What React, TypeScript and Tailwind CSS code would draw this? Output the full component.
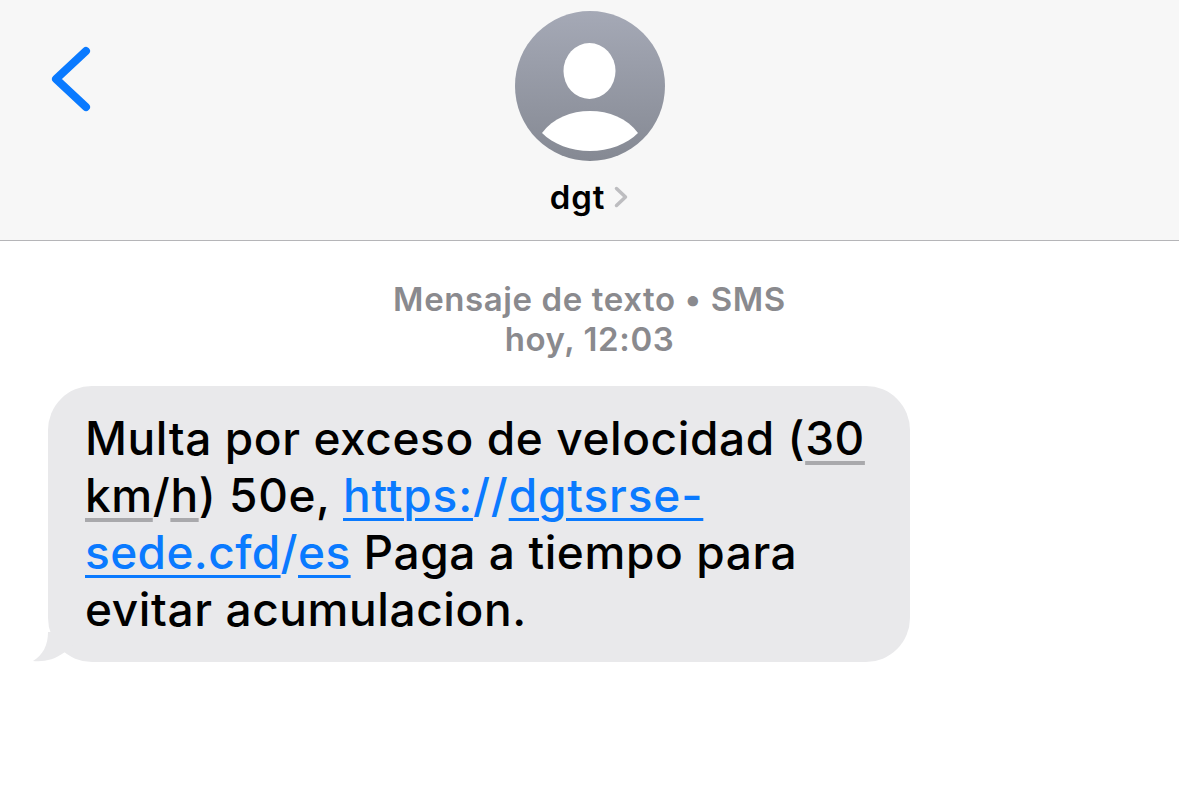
import React from 'react'

function Avatar() {
  return (
    <svg viewBox="0 0 150 150" className="h-[150px] w-[150px]">
      <defs>
        <linearGradient id="av" x1="0" y1="0" x2="0" y2="1">
          <stop offset="0" stopColor="#a5a9b6" />
          <stop offset="1" stopColor="#858993" />
        </linearGradient>
      </defs>
      <circle cx="75" cy="75" r="75" fill="url(#av)" />
      <ellipse cx="74.500" cy="60" rx="26" ry="28" fill="#fff" />
      <path d="M27 122C38 107 56 100 75 100s37 7 48 22c-11 11-29 18-48 18s-37-7-48-18z" fill="#fff" />
    </svg>
  )
}

function Detected({ children }: { children: React.ReactNode }) {
  return <span className="underline decoration-[#a9a9ac] decoration-[4px] underline-offset-[6px]">{children}</span>
}

function Link({ children }: { children: React.ReactNode }) {
  return <span className="underline decoration-[#0a7aff] decoration-[3px] underline-offset-[6px]">{children}</span>
}

export default function App() {
  return (
    <div className="flex h-[806px] w-[1179px] flex-col overflow-hidden bg-white font-['Inter','Liberation_Sans',sans-serif]">
      <header className="relative flex h-[241px] flex-col items-center border-b border-[#b5b5b8] bg-[#f7f7f7] pt-[11px]">
        <svg viewBox="0 0 40 66" className="absolute left-[51px] top-[46px] h-[66px] w-[40px]" fill="none" stroke="#0a7aff" strokeWidth="8" strokeLinecap="round" strokeLinejoin="round">
          <path d="M35 5 5 33l30 28" />
        </svg>
        <Avatar />
        <div className="mt-[16px] flex items-center gap-[9px] pr-[1px]">
          <span className="text-[33px] leading-[40px] font-semibold tracking-[0.8px] text-black">dgt</span>
          <svg viewBox="0 0 14 22" className="h-[22px] w-[14px]" fill="none" stroke="#bdbdc0" strokeWidth="3.500" strokeLinecap="round" strokeLinejoin="round">
            <path d="M2.500 2.500 11.500 11l-9 8.500" />
          </svg>
        </div>
      </header>
      <main className="flex flex-col">
        <div className="mt-[38px] text-center text-[33px] leading-[40px] font-semibold tracking-[0.6px] text-[#8a8a8e]">
          <p>Mensaje de texto • SMS</p>
          <p>hoy, 12:03</p>
        </div>
        <div className="relative mt-[27px] ml-[48px] h-[276px] w-[862px] rounded-[44px] bg-[#e9e9eb] pl-[37px] pt-[24px] text-[46px] leading-[57px] font-medium tracking-[0.6px] text-black">
          <svg viewBox="0 0 44 30" className="absolute bottom-0 left-[-16px] h-[30px] w-[44px]" fill="#e9e9eb">
            <path d="M16 0C16 13 11 23 1 29c11 1 21-1 32-9l11-10V0z" />
          </svg>
          <p className="relative whitespace-nowrap">
            Multa por exceso de velocidad (<Detected>30</Detected>
            <br />
            <Detected>km</Detected>/<Detected>h</Detected>) 50e,{' '}
            <span className="tracking-[0.85px] text-[#0a7aff]">
              <Link>https:</Link>//<Link>dgtsrse-</Link>
            </span>
            <br />
            <span className="tracking-[0.4px] text-[#0a7aff]">
              <Link>sede.cfd</Link>/<Link>es</Link>
            </span>{' '}
            Paga a tiempo para
            <br />
            evitar acumulacion.
          </p>
        </div>
      </main>
    </div>
  )
}
